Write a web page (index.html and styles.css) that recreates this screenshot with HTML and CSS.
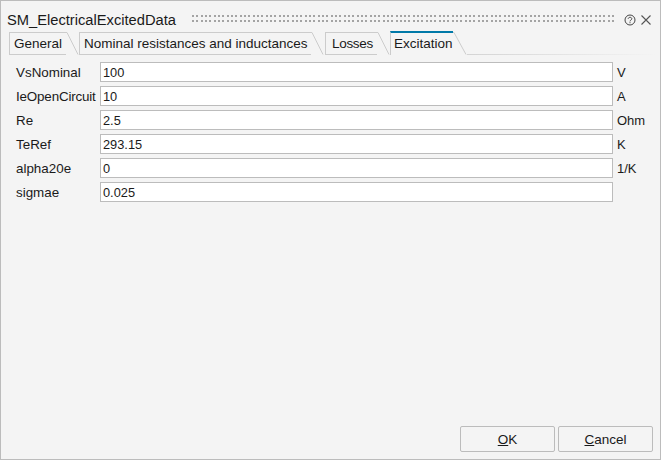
FILE: index.html
```html
<!DOCTYPE html>
<html lang="en">
<head>
    <meta charset="UTF-8">
    <title>SM_ElectricalExcitedData</title>
    <link rel="stylesheet" href="styles.css">
</head>
<body>
    <div class="dialog">
        <div class="title-bar">
            <span class="title">SM_ElectricalExcitedData</span>
            <div class="grip"></div>
            <svg class="title-icon" width="12" height="12" viewBox="0 0 12 12">
                <circle cx="6" cy="6" r="5" fill="none" stroke="#444" stroke-width="1"/>
                <path d="M4.2 4.8C4.3 2.8 7.8 2.8 7.8 4.8C7.8 6 6 6 6 7.4" fill="none" stroke="#444" stroke-width="1"/>
                <rect x="5.5" y="8.2" width="1" height="1" fill="#444"/>
            </svg>
            <svg class="title-icon close-icon" width="10" height="10" viewBox="0 0 10 10">
                <path d="M.5 .5L9.5 9.5M9.5 .5L.5 9.5" stroke="#555" stroke-width="1.1"/>
            </svg>
        </div>

        <div class="tabs">
            <div class="tab tab-general">
                <span class="tab-label">General</span>
                <svg class="tab-slant" width="13" height="23" viewBox="0 0 13 23"><path d="M0 .5H1L12 22.5" fill="none" stroke="#ccc"/></svg>
            </div>
            <div class="tab tab-nominal">
                <span class="tab-label">Nominal resistances and inductances</span>
                <svg class="tab-slant" width="13" height="23" viewBox="0 0 13 23"><path d="M0 .5H1L12 22.5" fill="none" stroke="#ccc"/></svg>
            </div>
            <div class="tab tab-losses">
                <span class="tab-label">Losses</span>
                <svg class="tab-slant" width="13" height="23" viewBox="0 0 13 23"><path d="M0 .5H1L12 22.5" fill="none" stroke="#ccc"/></svg>
            </div>
            <div class="tab tab-active">
                <span class="tab-label">Excitation</span>
                <svg class="tab-slant" width="14" height="24" viewBox="0 0 14 24"><path d="M0 1.5H1L13 23.5" fill="none" stroke="#ccc"/></svg>
            </div>
            <div class="tab-line"></div>
        </div>

        <div class="form">
            <label class="field-label">VsNominal</label>
            <input class="field-input" type="text" value="100">
            <span class="field-unit">V</span>

            <label class="field-label field-label-tight">IeOpenCircuit</label>
            <input class="field-input" type="text" value="10">
            <span class="field-unit">A</span>

            <label class="field-label">Re</label>
            <input class="field-input" type="text" value="2.5">
            <span class="field-unit">Ohm</span>

            <label class="field-label">TeRef</label>
            <input class="field-input" type="text" value="293.15">
            <span class="field-unit">K</span>

            <label class="field-label">alpha20e</label>
            <input class="field-input" type="text" value="0">
            <span class="field-unit">1/K</span>

            <label class="field-label">sigmae</label>
            <input class="field-input" type="text" value="0.025">
            <span class="field-unit"></span>
        </div>

        <div class="buttons">
            <button class="btn"><u>O</u>K</button>
            <button class="btn"><u>C</u>ancel</button>
        </div>
    </div>
</body>
</html>
```

FILE: styles.css
```css
* {
    box-sizing: border-box;
}
html, body {
    margin: 0;
    height: 100%;
}
body {
    font-family: "Liberation Sans", Arial, sans-serif;
    font-size: 13px;
    color: #1a1a1a;
}
.dialog {
    width: 661px;
    height: 460px;
    background-color: #f4f4f4;
    border: 1px solid #bcbcbc;
    display: flex;
    flex-direction: column;
}
.title-bar {
    height: 30px;
    padding: 9px 0 0 6px;
    display: flex;
    align-items: flex-start;
}
.title {
    font-size: 14.7px;
    line-height: 20px;
    width: 185px;
    flex-shrink: 0;
}
.grip {
    width: 423px;
    height: 7px;
    margin-top: 5px;
    flex-shrink: 0;
    background-image: repeating-linear-gradient(to right, #a4a4a4 0, #a4a4a4 2px, transparent 2px, transparent 4.33px);
    -webkit-mask-image: repeating-linear-gradient(to bottom, #000 0, #000 2px, transparent 2px, transparent 5px);
}
.title-icon {
    margin: 4px 0 0 9px;
    flex-shrink: 0;
}
.close-icon {
    margin: 5px 0 0 5px;
}
.tabs {
    height: 24px;
    padding-left: 8px;
    display: flex;
    align-items: flex-end;
}
.tab {
    height: 23px;
    display: flex;
    flex-shrink: 0;
}
.tab-label {
    flex: 1;
    height: 23px;
    line-height: 22px;
    padding-left: 4px;
    font-size: 13.5px;
    border-left: 1px solid #ccc;
    border-top: 1px solid #ccc;
    border-bottom: 1px solid #ccc;
    white-space: nowrap;
}
.tab-slant {
    flex-shrink: 0;
}
.tab-general {
    width: 70px;
}
.tab-nominal {
    width: 245px;
    margin-right: 1px;
}
.tab-losses {
    width: 65px;
}
.tab-losses .tab-label {
    padding-left: 6px;
    letter-spacing: -0.3px;
}
.tab-active {
    width: 77px;
    height: 24px;
}
.tab-active .tab-label {
    height: 24px;
    line-height: 21px;
    border-top: 2px solid #0079a8;
    border-bottom: none;
    padding-left: 3px;
    background-color: #f4f4f4;
}
.tab-line {
    width: 190px;
    height: 1px;
    background-image: linear-gradient(to right, #d4d4d4, #f4f4f4);
}
.form {
    padding: 7px 0 0 15px;
    display: grid;
    grid-template-columns: 84px 513px auto;
    grid-auto-rows: 20px;
    row-gap: 4px;
    align-items: center;
}
.field-label {
    white-space: nowrap;
    font-size: 13.4px;
}
.field-label-tight {
    letter-spacing: -0.17px;
}
.field-input {
    height: 20px;
    width: 100%;
    padding: 0 2px;
    border: 1px solid #bcbcbc;
    border-radius: 0;
    background-color: #fff;
    font: inherit;
    font-size: 12.8px;
    color: #1a1a1a;
    outline: none;
}
.field-unit {
    padding-left: 4px;
}
.buttons {
    margin-top: auto;
    padding: 0 7px 7px 0;
    display: flex;
    justify-content: flex-end;
    gap: 3px;
}
.btn {
    width: 95px;
    height: 26px;
    padding: 0;
    background-color: #f4f4f4;
    border: 1px solid #bcbcbc;
    border-radius: 2px;
    font: inherit;
    font-size: 13.5px;
    color: #1a1a1a;
}
```
